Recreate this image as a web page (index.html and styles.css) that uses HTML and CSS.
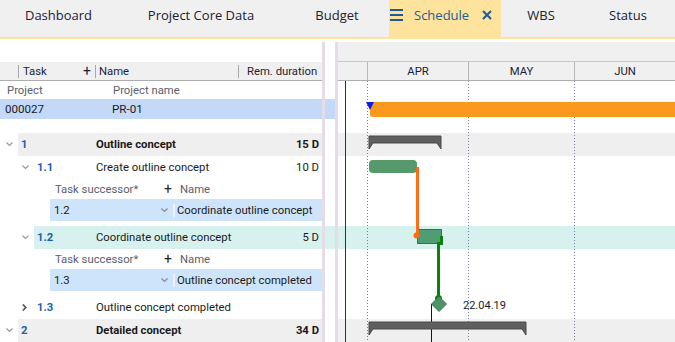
FILE: index.html
```html
<!DOCTYPE html>
<html>
<head lang="en">
    <meta charset="UTF-8">
    <title>Schedule</title>
    <link rel="stylesheet" href="styles.css">
</head>
<body>
<div class="tabs">
    <div class="tab t1">Dashboard</div>
    <div class="tab t2">Project Core Data</div>
    <div class="tab t3">Budget</div>
    <div class="tab active">
        <svg class="menu" width="13" height="12" viewBox="0 0 13 12"><path d="M0 1h13M0 6h13M0 11h13" stroke="#1f5a9c" stroke-width="2"/></svg>
        <span>Schedule</span>
        <svg class="close" width="10" height="10" viewBox="0 0 10 10"><path d="M1 1l8 8M9 1l-8 8" stroke="#1f5a9c" stroke-width="2"/></svg>
    </div>
    <div class="tab t5">WBS</div>
    <div class="tab t6">Status</div>
</div>

<div class="main">
    <div class="row head-top">
        <div class="left"></div>
        <div class="gap"></div>
        <div class="chart"></div>
    </div>
    <div class="row head">
        <div class="left">
            <div class="hc c-task">Task<span class="plus">+</span></div>
            <div class="hc c-name">Name</div>
            <div class="hc c-dur">Rem. duration</div>
        </div>
        <div class="gap"></div>
        <div class="chart months">
            <div class="m m0"></div>
            <div class="m m1">APR</div>
            <div class="m m2">MAY</div>
            <div class="m m3">JUN</div>
        </div>
    </div>
    <div class="row labels">
        <div class="left"><span class="p-id">Project</span><span class="p-name">Project name</span></div>
        <div class="gap"></div>
        <div class="chart"></div>
    </div>
    <div class="row project">
        <div class="left"><span class="p-id">000027</span><span class="p-name">PR-01</span></div>
        <div class="gap"></div>
        <div class="chart"></div>
    </div>
    <div class="row spacer">
        <div class="left"></div>
        <div class="gap"></div>
        <div class="chart"></div>
    </div>

    <div class="row task sum l0">
        <div class="left">
            <span class="tog"><svg width="7" height="5" viewBox="0 0 7 5"><path d="M0.5 0.5l3 3 3-3" fill="none" stroke="#9a9a9a" stroke-width="1.2"/></svg></span>
            <div class="cells"><span class="num">1</span><span class="name">Outline concept</span><span class="dur">15 D</span></div>
        </div>
        <div class="gap"></div>
        <div class="chart"></div>
    </div>
    <div class="row task l1">
        <div class="left">
            <span class="tog"><svg width="7" height="5" viewBox="0 0 7 5"><path d="M0.5 0.5l3 3 3-3" fill="none" stroke="#9a9a9a" stroke-width="1.2"/></svg></span>
            <div class="cells"><span class="num">1.1</span><span class="name">Create outline concept</span><span class="dur">10 D</span></div>
        </div>
        <div class="gap"></div>
        <div class="chart"></div>
    </div>
    <div class="row detail">
        <div class="left">
            <div class="sub"><span class="s-val">Task successor*<span class="plus">+</span></span><span class="s-name">Name</span></div>
            <div class="pick"><span class="s-val">1.2<svg width="7" height="5" viewBox="0 0 7 5"><path d="M0.5 0.5l3 3 3-3" fill="none" stroke="#8a8a8a" stroke-width="1.2"/></svg></span><span class="s-name">Coordinate outline concept</span></div>
        </div>
        <div class="gap"></div>
        <div class="chart"></div>
    </div>
    <div class="row task sel l1">
        <div class="left">
            <span class="tog"><svg width="7" height="5" viewBox="0 0 7 5"><path d="M0.5 0.5l3 3 3-3" fill="none" stroke="#9a9a9a" stroke-width="1.2"/></svg></span>
            <div class="cells"><span class="num">1.2</span><span class="name">Coordinate outline concept</span><span class="dur">5 D</span></div>
        </div>
        <div class="gap"></div>
        <div class="chart"></div>
    </div>
    <div class="row detail">
        <div class="left">
            <div class="sub"><span class="s-val">Task successor*<span class="plus">+</span></span><span class="s-name">Name</span></div>
            <div class="pick"><span class="s-val">1.3<svg width="7" height="5" viewBox="0 0 7 5"><path d="M0.5 0.5l3 3 3-3" fill="none" stroke="#8a8a8a" stroke-width="1.2"/></svg></span><span class="s-name">Outline concept completed</span></div>
        </div>
        <div class="gap"></div>
        <div class="chart"></div>
    </div>
    <div class="row task l1">
        <div class="left">
            <span class="tog"><svg width="5" height="7" viewBox="0 0 5 7"><path d="M0.8 0.5l3 3-3 3" fill="none" stroke="#505050" stroke-width="1.6"/></svg></span>
            <div class="cells"><span class="num">1.3</span><span class="name">Outline concept completed</span><span class="dur"></span></div>
        </div>
        <div class="gap"></div>
        <div class="chart"></div>
    </div>
    <div class="row task sum l0">
        <div class="left">
            <span class="tog"><svg width="7" height="5" viewBox="0 0 7 5"><path d="M0.5 0.5l3 3 3-3" fill="none" stroke="#9a9a9a" stroke-width="1.2"/></svg></span>
            <div class="cells"><span class="num">2</span><span class="name">Detailed concept</span><span class="dur">34 D</span></div>
        </div>
        <div class="gap"></div>
        <div class="chart"></div>
    </div>

    <!-- timeline drawing over the chart rows -->
    <svg class="canvas" width="337" height="261" viewBox="0 0 337 261">
        <rect x="7" y="0" width="1" height="261" fill="#7b1010"/>
        <path d="M29.5 0V261M130.5 0V261M236.5 0V261" stroke="#767c9e" stroke-width="1" stroke-dasharray="1 2"/>

        <path d="M32 21H337V36H35Q32 36 32 33Z" fill="#fb981e"/>
        <path d="M28 21H36L32 29Z" fill="#0c1ee6"/>

        <path d="M31 55H103V68L99 62H35L31 68Z" fill="#5f5f5f" stroke="#4a4a4a" stroke-width="1"/>

        <rect x="31" y="79" width="48" height="13" rx="4" fill="#569a6c"/>

        <rect x="79.5" y="148.5" width="24" height="14" fill="#4f9d73" stroke="#000" stroke-width="1" stroke-dasharray="1 1"/>
        <path d="M79.5 86V154" stroke="#ff6c14" stroke-width="3"/>
        <circle cx="78.5" cy="154.5" r="3" fill="#ff6c14"/>

        <path d="M103.5 155V162.5H100.5V217" stroke="#0a820a" stroke-width="3" fill="none"/>
        <circle cx="100.5" cy="217.5" r="3.5" fill="#0a820a"/>
        <path d="M93.5 223V261" stroke="#0000c8" stroke-width="1"/>
        <path d="M101 215.5L108.5 223L101 230.5L93.5 223Z" fill="#4d9468" stroke="#3b7a55" stroke-width="1"/>
        <text x="125" y="228" class="date">22.04.19</text>

        <path d="M31 241H188V254L184 248H35L31 254Z" fill="#5f5f5f" stroke="#4a4a4a" stroke-width="1"/>
    </svg>
</div>
</body>
</html>
```

FILE: styles.css
```css
*{
    margin: 0;
    padding: 0;
    box-sizing: border-box;
}
body{
    width: 675px;
    height: 342px;
    overflow: hidden;
    background: #fff;
    font-family: Roboto, "Liberation Sans", sans-serif;
    font-size: 11.3px;
    color: #1a1a1a;
}

/* tab strip */
.tabs{
    display: flex;
    height: 39px;
    background: #f0f0f0;
    border-bottom: 2px solid #fde49e;
    font-family: "Open Sans", "Noto Sans", sans-serif;
    font-size: 13px;
    color: #202030;
}
.tab{
    display: flex;
    align-items: center;
    justify-content: center;
    flex: none;
    padding-bottom: 8px;
}
.t1{ width: 117px; }
.t2{ width: 168px; }
.t3{ width: 104px; }
.t5{ width: 80px; }
.t6{ flex: 1; }
.tab.active{
    width: 112px;
    justify-content: flex-start;
    background: #fde39c;
    padding-left: 1px;
    color: #1f5a9c;
}
.tab.active span{
    margin: 0 13px 0 11px;
}

/* main grid */
.main{
    position: relative;
}
.row{
    display: flex;
}
.left{
    width: 322px;
    flex: none;
    display: flex;
    align-items: center;
}
.gap{
    width: 16px;
    flex: none;
    border-left: 3px solid #e4dde7;
    border-right: 3px solid #e4dde7;
}
.chart{
    flex: 1;
}

.head-top{
    height: 23px;
}
.head-top .gap,
.head-top .chart{
    margin-top: 3px;
}
.head-top .chart{
    background: #f0f0f0;
    border-bottom: 1px solid #c9c9c9;
}

.head{
    height: 19px;
}
.head .left,
.head .chart{
    background: #f0f0f0;
    border-bottom: 1px solid #adadad;
}
.head .left{
    padding-left: 18px;
    color: #1c1c3a;
}
.hc{
    display: flex;
    align-items: center;
    height: 13px;
    border-left: 1px solid #a8a8a8;
}
.c-task{
    width: 77px;
    padding-left: 4px;
}
.c-task .plus{
    margin-left: auto;
    margin-right: 4px;
    font-size: 14px;
}
.c-name{
    width: 143px;
    padding-left: 3px;
}
.c-dur{
    padding-left: 8px;
}
.months{
    display: flex;
}
.m{
    display: flex;
    align-items: center;
    justify-content: center;
    color: #1c1c3a;
}
.m0{ width: 29px; }
.m1{ width: 101px; border-left: 1px solid #b8b8b8; }
.m2{ width: 106px; border-left: 1px solid #b8b8b8; }
.m3{ flex: 1; border-left: 1px solid #b8b8b8; }

.labels{
    height: 18px;
    color: #5c5c6a;
}
.labels .p-id{ width: 113px; padding-left: 7px; }
.project{
    height: 20px;
    font-size: 11.6px;
}
.project .left,
.project .gap{
    background: #c4d8f7;
}
.project .p-id{ width: 112px; padding-left: 5px; }

.spacer{
    height: 14px;
}

/* task rows */
.task{
    height: 23px;
}
.task .left{
    align-items: stretch;
}
.tog{
    display: flex;
    align-items: center;
    width: 18px;
    padding-left: 6px;
    flex: none;
}
.l1 .tog{
    margin-left: 16px;
}
.task .cells{
    flex: 1;
    display: flex;
    align-items: center;
    padding: 0 3px;
}
.num{
    color: #1d5fae;
    font-weight: bold;
}
.l0 .num{ width: 75px; }
.l1 .num{ width: 59px; }
.name{
    flex: 1;
}
.sum .name,
.sum .dur{
    font-weight: bold;
}
.sum .cells,
.sum .chart{
    background: #efefef;
}
.sel .cells,
.sel .gap,
.sel .chart{
    background: #d7f1ef;
}

/* successor detail */
.detail .left{
    flex-direction: column;
    align-items: stretch;
    padding: 0 0 5px 50px;
}
.sub,
.pick{
    display: flex;
    align-items: center;
}
.sub{
    height: 20px;
    color: #5c5c6a;
}
.pick{
    height: 22px;
    background: #cde4fa;
}
.s-val{
    display: flex;
    align-items: center;
    width: 125px;
    padding-left: 5px;
}
.sub .plus{
    margin-left: auto;
    margin-right: 3px;
    font-size: 14px;
    color: #222;
}
.pick .s-val{
    padding-left: 4px;
    border-right: 2px solid #eaf3fd;
}
.pick .s-val svg{
    margin-left: auto;
    margin-right: 5px;
}
.pick .s-name{
    padding-left: 2px;
}
.sub .s-name{
    padding-left: 5px;
}

/* timeline canvas */
.canvas{
    position: absolute;
    left: 338px;
    top: 42px;
}
.date{
    font-family: Roboto, "Liberation Sans", sans-serif;
    font-size: 11px;
    fill: #1a1a2a;
}
```
